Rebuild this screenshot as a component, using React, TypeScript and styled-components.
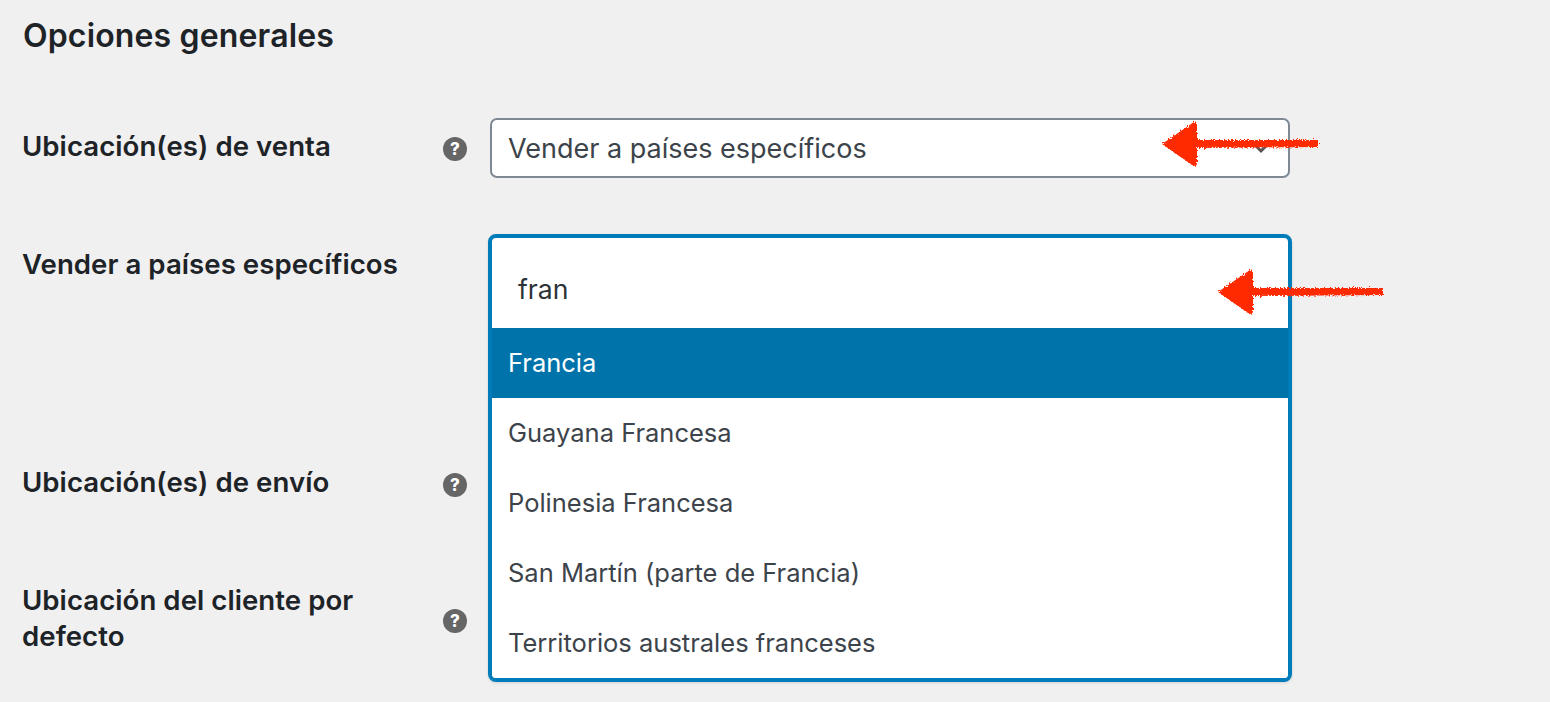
import React from "react";
import styled, { createGlobalStyle } from "styled-components";

const Global = createGlobalStyle`
  html, body { margin: 0; padding: 0; height: 702px; overflow: hidden; background: #f0f0f1; }
  body { font-family: Inter, "Liberation Sans", sans-serif; color: #1d2327; }
  * { box-sizing: border-box; }
`;

const Page = styled.main`
  position: relative;
  width: 1550px;
  height: 702px;
  padding: 0 0 0 23px;
  overflow: hidden;
`;

const Heading = styled.h2`
  margin: 0;
  height: 118px;
  padding-top: 15px;
  font-size: 32px;
  line-height: 42px;
  font-weight: 600;
  letter-spacing: 0.15px;
  color: #1d2327;
`;

const Form = styled.div`
  display: flex;
  flex-direction: column;
  gap: 56px;
`;

const Row = styled.div<{ $height: number; $top?: boolean }>`
  display: grid;
  grid-template-columns: 420px 47px 800px;
  align-items: ${(p) => (p.$top ? "start" : "center")};
  height: ${(p) => p.$height}px;
`;

const Label = styled.div<{ $top?: boolean }>`
  margin-left: -1px;
  font-size: 27.6px;
  line-height: 36px;
  font-weight: 600;
  letter-spacing: 0.05px;
  color: #1d2327;
  padding-top: ${(p) => (p.$top ? "12px" : "0")};
  padding-bottom: ${(p) => (p.$top ? "0" : "4px")};
  width: 380px;
`;

const Tip = styled.span`
  display: flex;
  align-items: center;
  justify-content: center;
  width: 24px;
  height: 24px;
  margin-top: 2px;
  border-radius: 50%;
  background: #666666;
  color: #ffffff;
  font-size: 17px;
  font-weight: 800;
  line-height: 24px;
`;

const Select = styled.div`
  display: flex;
  align-items: center;
  justify-content: space-between;
  width: 800px;
  height: 60px;
  padding: 0 17px 0 16px;
  background: #ffffff;
  border: 2px solid #7e8993;
  border-radius: 7px;
  font-size: 27px;
  color: #3c434a;
`;

const Chevron = styled.svg`
  display: block;
  width: 20px;
  height: 20px;
  margin-top: 2px;
`;

const Field = styled.div`
  position: relative;
  width: 800px;
  height: 100%;
`;

const Dropdown = styled.div`
  position: absolute;
  z-index: 1;
  top: 0;
  left: -2px;
  width: 804px;
  height: 448px;
  background: #ffffff;
  border: 4px solid #007cba;
  border-radius: 8px;
  box-shadow: 0 1px 3px rgba(0, 0, 0, 0.12);
  overflow: hidden;
`;

const Search = styled.div`
  height: 90px;
  padding: 33px 0 0 26px;
  font-size: 26.6px;
  line-height: 36px;
  color: #2c3338;
`;

const Option = styled.div<{ $active?: boolean }>`
  height: 70px;
  padding-left: 16px;
  font-size: 25.5px;
  line-height: 69px;
  color: ${(p) => (p.$active ? "#ffffff" : "#3c434a")};
  background: ${(p) => (p.$active ? "#0073aa" : "#ffffff")};
`;

const ArrowSvg = styled.svg<{ $left: number; $top: number }>`
  position: absolute;
  z-index: 2;
  left: ${(p) => p.$left}px;
  top: ${(p) => p.$top}px;
  overflow: visible;
`;

function Arrow({ left, top, width, id }: { left: number; top: number; width: number; id: string }) {
  return (
    <ArrowSvg $left={left} $top={top} width={width} height={48} viewBox={`0 0 ${width} 48`}>
      <defs>
        <filter id={id} x="-5%" y="-20%" width="110%" height="140%">
          <feTurbulence type="fractalNoise" baseFrequency="0.8" numOctaves="3" seed="4" result="n" />
          <feDisplacementMap in="SourceGraphic" in2="n" scale="5" />
        </filter>
      </defs>
      <path
        d={`M0 23 L32 1 Q35 0 35 4 L35 19 L${width} 19 L${width} 26 L35 27 L35 42 Q35 46 30 44 Z`}
        fill="#ff2a00"
        filter={`url(#${id})`}
      />
    </ArrowSvg>
  );
}

const OPTIONS = ["Guayana Francesa", "Polinesia Francesa", "San Martín (parte de Francia)", "Territorios australes franceses"];

export default function App() {
  return (
    <Page>
      <Global />
      <Heading>Opciones generales</Heading>
      <Form>
        <Row $height={60}>
          <Label>Ubicación(es) de venta</Label>
          <Tip>?</Tip>
          <Select>
            Vender a países específicos
            <Chevron viewBox="0 0 20 20" fill="none" stroke="#555" strokeWidth="3">
              <path d="M3 5 L10 12 L17 5" />
            </Chevron>
          </Select>
        </Row>
        <Row $height={164} $top>
          <Label $top>Vender a países específicos</Label>
          <span />
          <Field>
            <Dropdown>
              <Search>fran</Search>
              <Option $active>Francia</Option>
              {OPTIONS.map((o) => (
                <Option key={o}>{o}</Option>
              ))}
            </Dropdown>
          </Field>
        </Row>
        <Row $height={60}>
          <Label>Ubicación(es) de envío</Label>
          <Tip>?</Tip>
        </Row>
        <Row $height={100}>
          <Label>Ubicación del cliente por defecto</Label>
          <Tip>?</Tip>
        </Row>
      </Form>
      <Arrow id="rough-a" left={1162} top={121} width={156} />
      <Arrow id="rough-b" left={1218} top={269} width={165} />
    </Page>
  );
}
